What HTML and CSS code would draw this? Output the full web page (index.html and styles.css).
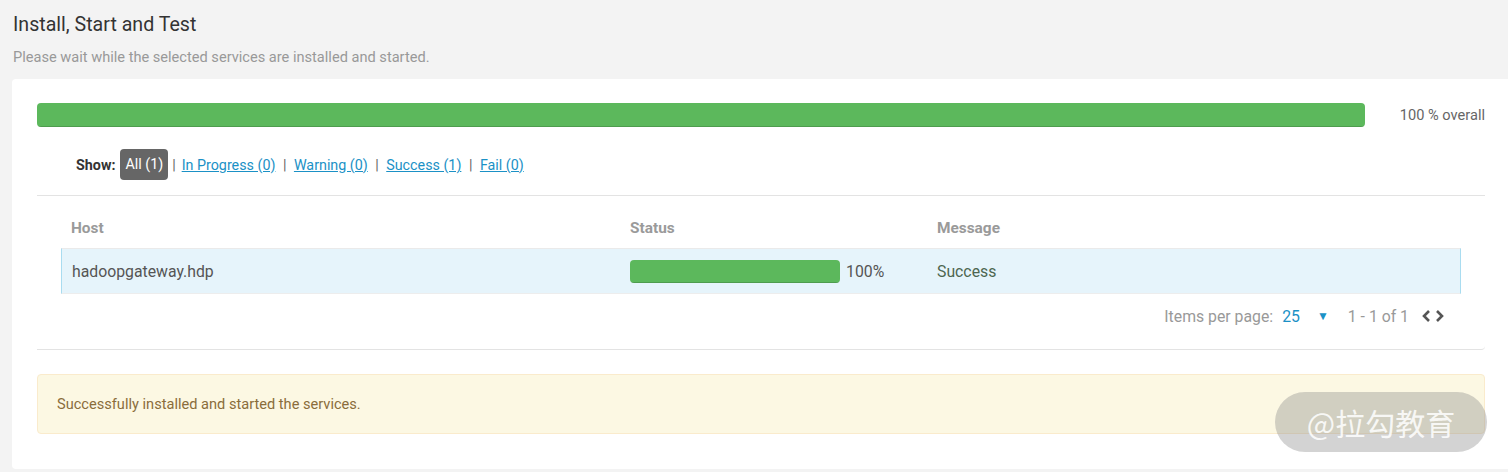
FILE: index.html
```html
<!DOCTYPE html>
<html lang="en">
<head>
    <meta charset="UTF-8">
    <meta name="viewport" content="width=device-width, initial-scale=1.0">
    <title>Install, Start and Test</title>
    <link rel="stylesheet" href="styles.css">
</head>
<body>

<div class="page">
    <h2 class="title">Install, Start and Test</h2>
    <p class="subtitle">Please wait while the selected services are installed and started.</p>

    <div class="card">
        <div class="overall">
            <div class="progress big"><div class="bar" style="width: 100%"></div></div>
            <span class="overall-label">100 % overall</span>
        </div>

        <div class="filter">
            <span class="show">Show:</span>
            <span class="pill">All (1)</span>
            <span class="sep">|</span>
            <a href="#">In Progress (0)</a>
            <span class="sep">|</span>
            <a href="#">Warning (0)</a>
            <span class="sep">|</span>
            <a href="#">Success (1)</a>
            <span class="sep">|</span>
            <a href="#">Fail (0)</a>
        </div>

        <div class="hosts">
            <div class="row head">
                <div>Host</div>
                <div>Status</div>
                <div>Message</div>
            </div>
            <div class="row item">
                <div>hadoopgateway.hdp</div>
                <div class="status">
                    <div class="progress small"><div class="bar" style="width: 100%"></div></div>
                    <span>100%</span>
                </div>
                <div class="msg">Success</div>
            </div>
            <div class="pager">
                <span class="muted">Items per page:</span>
                <span class="per-page">25</span>
                <span class="caret">&#9660;</span>
                <span class="muted">1 - 1 of 1</span>
                <span class="arrows">
                    <svg width="11" height="14" viewBox="0 0 11 14"><path d="M8 2 L3 7 L8 12" fill="none" stroke="#555" stroke-width="2.6"/></svg>
                    <svg width="11" height="14" viewBox="0 0 11 14"><path d="M3 2 L8 7 L3 12" fill="none" stroke="#555" stroke-width="2.6"/></svg>
                </span>
            </div>
        </div>

        <div class="alert">Successfully installed and started the services.</div>
    </div>
</div>

<div class="watermark">@拉勾教育</div>

</body>
</html>
```

FILE: styles.css
```css
body {
    margin: 0;
    background: #f3f3f3;
    font-family: Roboto, "Liberation Sans", Arial, sans-serif;
    color: #333;
    overflow: hidden;
}
.page {
    padding: 13px 0 0 12px;
}
.title {
    margin: 0 0 0 1px;
    font-size: 19.6px;
    font-weight: 400;
    line-height: 24px;
    color: #333;
}
.subtitle {
    margin: 10px 0 0 1px;
    font-size: 14.6px;
    line-height: 20px;
    color: #999;
}
.card {
    margin: 12px -4px 0 0;
    background: #fff;
    border-radius: 4px;
    padding: 24px 27px 35px 25px;
}
.overall {
    display: flex;
    align-items: center;
}
.progress {
    background: #f5f5f5;
    border-radius: 4px;
    overflow: hidden;
}
.progress .bar {
    height: 100%;
    background: #5cb85c;
    box-shadow: inset 0 -1px 0 rgba(0, 0, 0, 0.15);
}
.progress.big {
    flex: 1;
    height: 24px;
}
.overall-label {
    width: 120px;
    text-align: right;
    font-size: 14.6px;
    color: #666;
}
.filter {
    display: flex;
    align-items: center;
    margin: 22px 0 0 39px;
    font-size: 14.3px;
    padding-bottom: 15px;
}
.filter .show {
    font-weight: 700;
    margin-right: 5px;
}
.filter .pill {
    background: #666;
    color: #fff;
    border-radius: 4px;
    padding: 0 5px;
    line-height: 31px;
}
.filter .sep {
    color: #666;
    margin: 0 6px 0 4px;
}
.filter a {
    color: #1b91c6;
    text-decoration: underline;
}
.filter a + .sep {
    margin: 0 7.5px;
}
.hosts {
    border-top: 1px solid #e3e3e3;
    border-bottom: 1px solid #e3e3e3;
    border-bottom-right-radius: 4px;
    padding: 12px 24px 11px 24px;
}
.row {
    display: grid;
    grid-template-columns: 569px 307px 1fr;
    align-items: center;
    font-size: 15.8px;
}
.row > div:first-child {
    padding-left: 10px;
}
.row.head {
    height: 40px;
    font-weight: 700;
    font-size: 15.4px;
    color: #9a9a9a;
}
.row.item {
    height: 44px;
    background: #e6f4fb;
    border-top: 1px solid #eaeaea;
    border-bottom: 1px solid #ededed;
    border-left: 1px solid #a9dcf0;
    border-right: 1px solid #a9dcf0;
    color: #555;
}
.row.item > div:first-child {
    padding-left: 10px;
}
.status {
    display: flex;
    align-items: center;
    gap: 6px;
    margin-left: -1px;
}
.progress.small {
    width: 210px;
    height: 23px;
}
.msg {
    color: #4d6650;
    margin-left: -1px;
}
.pager {
    display: flex;
    justify-content: flex-end;
    align-items: center;
    height: 44px;
    padding-right: 16px;
    font-size: 15.8px;
}
.pager .muted {
    color: #999;
}
.pager .per-page {
    color: #1b91c6;
    margin-left: 9px;
}
.pager .caret {
    color: #1b91c6;
    font-size: 12px;
    margin: 0 19px 0 17px;
}
.pager .arrows {
    display: flex;
    gap: 2px;
    margin-left: 12px;
}
.alert {
    margin-top: 24px;
    background: #fcf8e3;
    border: 1px solid #faebcc;
    border-radius: 4px;
    padding: 19px 19px;
    font-size: 14.6px;
    line-height: 20px;
    color: #8a6d3b;
}
.watermark {
    position: absolute;
    left: 1275px;
    top: 392px;
    width: 212px;
    height: 60px;
    border-radius: 30px;
    background: rgba(140, 140, 140, 0.38);
    color: rgba(255, 255, 255, 0.85);
    font-family: "Noto Sans CJK SC", sans-serif;
    font-size: 30px;
    line-height: 60px;
    text-align: center;
}
```
